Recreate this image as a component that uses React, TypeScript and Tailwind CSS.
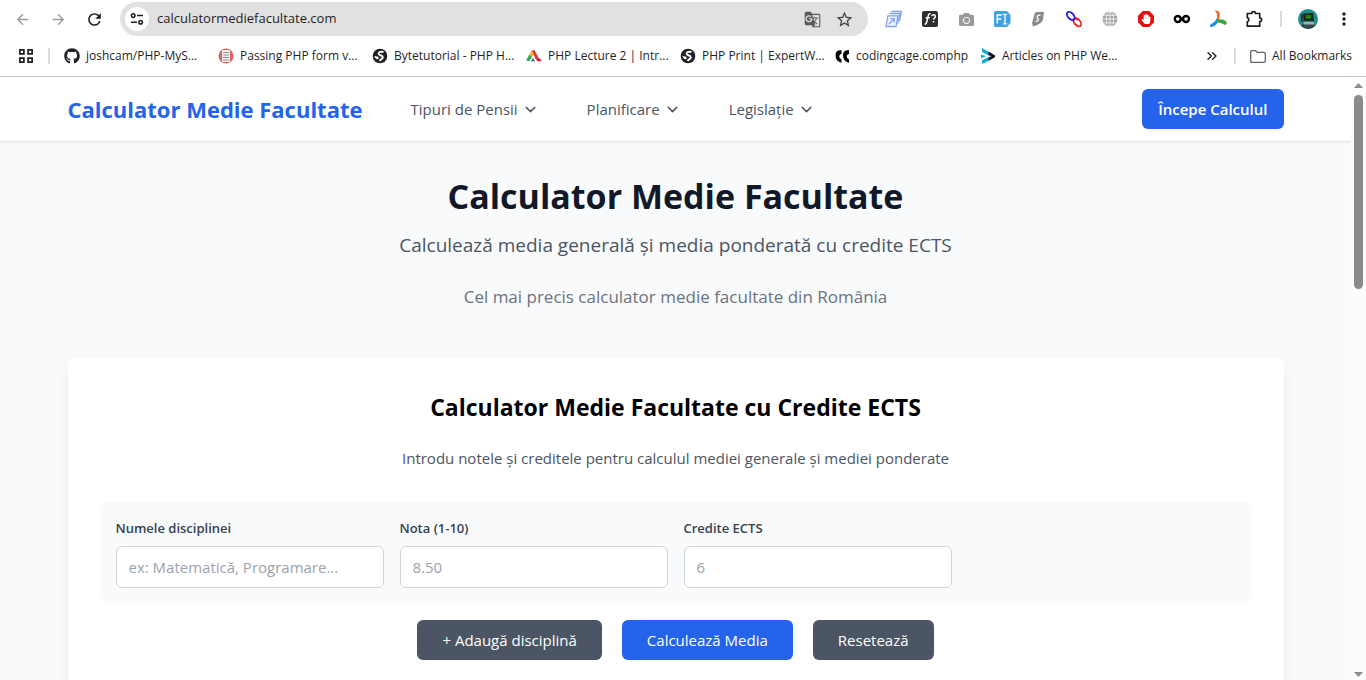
import React from "react";
import { FaGithub, FaHandPaper, FaCamera } from "react-icons/fa";
import { MdGTranslate, MdStarBorder, MdArrowBack, MdArrowForward, MdRefresh, MdMoreVert } from "react-icons/md";
import { ChevronDown, ChevronsRight } from "lucide-react";

function TuneIcon() {
  return (
    <svg width="14" height="14" viewBox="0 0 14 14" fill="none" stroke="#1f1f1f" strokeWidth="1.5">
      <circle cx="3.2" cy="3.6" r="1.8" />
      <path d="M7 3.6h6M1 10.2h6" />
      <circle cx="10.6" cy="10.2" r="1.8" />
    </svg>
  );
}

function StackIcon() {
  return (
    <svg width="18" height="18" viewBox="0 0 18 18" fill="#eef4ff" stroke="#82a4ea" strokeWidth="1.3">
      <path d="M6 1.5h10.5l-2 9.5" />
      <path d="M4.4 3.6h10.4l-2 10" />
      <path d="M2.8 5.8h10.2L11 16.5H1z" />
      <path d="M4 14l5-5M5.4 8.7h3.8v3.8" />
    </svg>
  );
}

function FunctionIcon() {
  return (
    <svg width="16" height="16" viewBox="0 0 16 16">
      <rect width="16" height="16" rx="2" fill="#2d2d2d" />
      <path d="M2.6 13c1.6.3 2-.9 2.4-3L6.2 4.900C6.600 3 7.400 2.400 8.600 2.900M3.600 6.700h4.200" fill="none" stroke="#fff" strokeWidth="1.5" />
      <path d="M9.800 5.300c.2-2 3.600-2 3.600.1 0 1.500-1.900 1.600-1.900 3.300M11.500 10v1.500" fill="none" stroke="#fff" strokeWidth="1.500" />
    </svg>
  );
}

function FontTagIcon() {
  return (
    <svg width="17" height="16" viewBox="0 0 17 16">
      <path d="M1.500 0H13l3.500 4v8L13 16H1.500Q0 16 0 14.500v-13Q0 0 1.500 0z" fill="#41a3e0" />
      <path d="M3.200 12.500V4h4.600M3.200 8h4M9 3.200q2 0 2 1.300 0-1.300 2-1.300M11 4.500v7.200M9 13q2 0 2-1.300 0 1.300 2 1.300" fill="none" stroke="#fff" strokeWidth="1.300" />
    </svg>
  );
}

function ShieldIcon() {
  return (
    <svg width="14" height="16" viewBox="0 0 14 16">
      <path d="M4 1.500Q8 .3 13 1l-1 7.500Q10.500 13 2 15.500L1 12z" fill="#8a8b8e" />
      <path d="M9.500 4.300c-2-.5-3.500.5-3.300 2 .2 1.300 1.500 1.400 1.100 2.700-.3 1-1.500 1.500-2.800 1.300" fill="none" stroke="#fff" strokeWidth="1.300" />
    </svg>
  );
}

function ChainIcon() {
  return (
    <svg width="18" height="18" viewBox="0 0 18 18" fill="none" strokeWidth="1.700">
      <ellipse cx="12.200" cy="12.200" rx="5" ry="2.900" transform="rotate(48 12.200 12.200)" stroke="#ee1420" />
      <ellipse cx="5.800" cy="6" rx="5" ry="2.900" transform="rotate(48 5.800 6)" stroke="#1a12e8" />
      <path d="M9.600 7.600q2 .8 3.200 2.600" stroke="#ee1420" />
    </svg>
  );
}

function GreyGlobeIcon() {
  return (
    <svg width="16" height="16" viewBox="0 0 16 16">
      <circle cx="8" cy="8" r="7.500" fill="#a2a2a2" />
      <g fill="none" stroke="#fff" strokeWidth=".8">
        <ellipse cx="8" cy="8" rx="3.600" ry="7.500" />
        <path d="M8 0v16M0 8h16M1.500 4.200h13M1.500 11.800h13" />
      </g>
    </svg>
  );
}

function StopHandIcon() {
  return (
    <span className="grid size-4 place-items-center">
      <svg width="16" height="16" viewBox="0 0 16 16" className="col-start-1 row-start-1">
        <path d="M4.700 0h6.600L16 4.700v6.600L11.300 16H4.700L0 11.300V4.700z" fill="#e60f0f" />
      </svg>
      <FaHandPaper size={10} color="#fff" className="col-start-1 row-start-1" />
    </span>
  );
}

function InfinityIcon() {
  return (
    <svg width="18" height="10" viewBox="0 0 18 10" fill="none" stroke="#000" strokeWidth="2.400">
      <circle cx="4.800" cy="5" r="3" />
      <circle cx="13" cy="5" r="3" />
      <path d="M7 3.500l4 3.200M7 6.700l4-3.200" strokeWidth="1.600" />
    </svg>
  );
}

function TriskeleIcon() {
  return (
    <svg width="18" height="18" viewBox="0 0 18 18">
      <path d="M5.800.7C9.500.2 11 2 10.700 5.500L10 10.500 7.600 9.500C8.400 6 8.600 3 5.800.7z" fill="#f5661f" />
      <path d="M7.600 8.500l2.400 2C8 14 5.500 17 2 17c-1.700-.1-1.500-2-.1-2.800C4.700 12.700 6.500 11 7.600 8.500z" fill="#1b8fea" />
      <path d="M6.700 12.400l3-3.200c3.300 0 6.700.6 8 2.800.5 1.800-.8 3.300-2.300 2.800-2.500-1.900-5-2.400-8.700-2.400z" fill="#3aa63a" />
    </svg>
  );
}

function PuzzleIcon() {
  return (
    <svg width="18" height="18" viewBox="0 0 18 18" fill="none" stroke="#1f1f1f" strokeWidth="1.700" strokeLinejoin="round">
      <path d="M2.300 3.500h4.400a1.900 1.900 0 0 1 3.800 0h4.200v4.300a1.900 1.900 0 0 1 0 3.800v4.600H2.300v-4.400a2.200 2.200 0 0 0 0-4.200z" />
    </svg>
  );
}

function AvatarIcon() {
  return (
    <svg width="20" height="20" viewBox="0 0 20 20">
      <circle cx="10" cy="10" r="10" fill="#1f8f8a" />
      <path d="M3 17l3-3h9l3 2a10 10 0 0 1-15 1z" fill="#33474c" />
      <path d="M5 4.500l10-.5 1 8H6z" fill="#1d2326" />
      <path d="M7 6l7-.3.500 4.800H7.300z" fill="#14420f" />
      <path d="M8 7h5M8 8.700h4.500" stroke="#4fc22d" strokeWidth=".8" />
      <path d="M5 13h10.500l1.500 2.500H6z" fill="#9fb2b2" />
      <path d="M3 5l2 .5.500 8L3 12z" fill="#3b2f2e" />
    </svg>
  );
}

function AppsIcon() {
  return (
    <svg width="14" height="14" viewBox="0 0 14 14" fill="none" stroke="#1f1f1f" strokeWidth="1.700">
      <path d="M.9.900h4v4h-4zM9.100.900h4v4h-4zM.9 9.100h4v4h-4zM9.100 9.100h4v4h-4z" />
    </svg>
  );
}

function DocIcon() {
  return (
    <svg width="16" height="16" viewBox="0 0 16 16">
      <circle cx="8" cy="8" r="7.500" fill="#d9665c" />
      <rect x="4" y="2" width="8" height="12" rx="1" fill="#f3eeee" />
      <path d="M5.200 4.500h5.600M5.200 7h5.600M5.200 9.500h5.600M5.200 12h5.600" stroke="#8f8f8f" strokeWidth="1.200" />
    </svg>
  );
}

function GlobeIcon() {
  return (
    <svg width="16" height="16" viewBox="0 0 16 16">
      <circle cx="8" cy="8" r="7.300" fill="#202124" />
      <path d="M11.500 4.200C9.500 3.200 6.500 4 6.500 5.800 6.600 7.500 10.800 7 10.800 9.300 10.600 11.300 8.500 11 7.600 13" fill="none" stroke="#fff" strokeWidth="1.900" />
      <path d="M2.300 8l4 .8.500 1.900-2 .6Q2.800 10.300 2.300 8z" fill="#fff" />
    </svg>
  );
}

function TriangleLogo() {
  return (
    <svg width="16" height="12" viewBox="0 0 16 12">
      <path d="M6 .3L3.300 4.500 6 7l2-3z" fill="#f4b81c" />
      <path d="M3.300 4.500L0 10.500l3.300.7L6 7z" fill="#38a852" />
      <path d="M6 .3h2.500l4 7.200-3 1.500L7.500 4z" fill="#e5322d" />
      <path d="M9.500 9l3-1.500 3.500 3.300-4 .6z" fill="#d81f3e" />
      <path d="M4.800 11.300L7 8l2 3.300z" fill="#4a5c86" />
    </svg>
  );
}

function QuotesLogo() {
  return (
    <svg width="15" height="13" viewBox="0 0 15 13" fill="#000">
      <path d="M6.500.3Q.5-.3.500 5.300.5 11.500 6.500 12.800V9.300Q4 8.500 4.300 6 4.500 4 6.500 4z" />
      <path d="M14 .3Q8-.3 8 5.300q0 6.200 6 7.500V9.300Q11.500 8.500 11.800 6 12 4 14 4z" />
    </svg>
  );
}

function ArrowLogo() {
  return (
    <svg width="14" height="16" viewBox="0 0 14 16">
      <path d="M1 0l8.500 5v3.400L1 4z" fill="#1aa3dd" />
      <path d="M1 16v-3.700L9.500 8v3.700z" fill="#1aa3dd" />
      <path d="M0 6.500l5 1.800-5 2z" fill="#1aa3dd" />
      <path d="M7.500 3.600L14 7.400v1.800l-6.500 3.600V9.900L10.500 8.300 7.500 6.700z" fill="#111" />
    </svg>
  );
}

function FolderIcon() {
  return (
    <svg width="16" height="13" viewBox="0 0 16 13" fill="none" stroke="#5f6368" strokeWidth="1.300">
      <path d="M.7 11V2Q.7.700 2 .7h3.600l1.700 1.700H14q1.300 0 1.300 1.300V11q0 1.300-1.300 1.300H2Q.7 12.300.7 11z" />
    </svg>
  );
}

const extensions = [
  { name: "Tab copier", icon: <StackIcon /> },
  { name: "Font finder", icon: <FunctionIcon /> },
  { name: "Screenshot", icon: <FaCamera size={15} color="#9a9a9a" /> },
  { name: "Font tag", icon: <FontTagIcon /> },
  { name: "Shield", icon: <ShieldIcon /> },
  { name: "Link checker", icon: <ChainIcon /> },
  { name: "Globe", icon: <GreyGlobeIcon /> },
  { name: "Blocker", icon: <StopHandIcon /> },
  { name: "Infinity", icon: <InfinityIcon /> },
  { name: "Triskele", icon: <TriskeleIcon /> },
  { name: "Extensions", icon: <PuzzleIcon /> },
];

const bookmarks = [
  { label: "joshcam/PHP-MyS...", icon: <FaGithub size={16} color="#1f2328" />, width: "w-[154px]" },
  { label: "Passing PHP form v...", icon: <DocIcon />, width: "w-[154px]" },
  { label: "Bytetutorial - PHP H...", icon: <GlobeIcon />, width: "w-[154px]" },
  { label: "PHP Lecture 2 | Intr...", icon: <TriangleLogo />, width: "w-[154px]" },
  { label: "PHP Print | ExpertW...", icon: <GlobeIcon />, width: "w-[154px]" },
  { label: "codingcage.comphp", icon: <QuotesLogo />, width: "w-[146px]" },
  { label: "Articles on PHP We...", icon: <ArrowLogo />, width: "w-auto" },
];

function ToolButton({ label, children }: { label: string; children: React.ReactNode }) {
  return (
    <button type="button" aria-label={label} className="flex h-9 w-9 shrink-0 items-center justify-center">
      {children}
    </button>
  );
}

function BrowserChrome() {
  return (
    <header className="shrink-0 border-b border-[#c8c8c8] bg-white text-[#1f1f1f]">
      <div className="flex h-[38px] items-center px-1">
        <ToolButton label="Back"><MdArrowBack size={17} color="#9b9b9b" /></ToolButton>
        <ToolButton label="Forward"><MdArrowForward size={17} color="#9b9b9b" /></ToolButton>
        <ToolButton label="Reload"><MdRefresh size={19} /></ToolButton>
        <div className="mx-2 flex h-[34px] min-w-0 flex-1 items-center rounded-full bg-[#e1e1e1] pr-2 pl-[5px]">
          <button type="button" aria-label="Site information" className="flex size-6 shrink-0 items-center justify-center rounded-full bg-white">
            <TuneIcon />
          </button>
          <input aria-label="Address" defaultValue="calculatormediefacultate.com" className="ml-2 min-w-0 flex-1 bg-transparent text-[13px] outline-none" />
          <button type="button" aria-label="Translate" className="flex w-8 justify-center"><MdGTranslate size={17} color="#5a5a5a" /></button>
          <button type="button" aria-label="Bookmark" className="flex w-8 justify-center"><MdStarBorder size={19} color="#444" /></button>
        </div>
        {extensions.map((e) => (
          <ToolButton key={e.name} label={e.name}>{e.icon}</ToolButton>
        ))}
        <span className="mx-2 h-4 w-0.5 bg-[#dedada]" />
        <ToolButton label="Profile"><AvatarIcon /></ToolButton>
        <ToolButton label="Menu"><MdMoreVert size={20} /></ToolButton>
      </div>
      <nav aria-label="Bookmarks" className="flex h-[38px] items-center pr-3.5 pb-0.5 pl-[19px] text-[12px]">
        <button type="button" aria-label="Apps"><AppsIcon /></button>
        <span className="mr-3.5 ml-[15px] h-4 w-0.5 bg-[#dedada]" />
        <div className="flex min-w-0 flex-1 overflow-hidden">
          {bookmarks.map((b) => (
            <a key={b.label} href="#" className={`flex shrink-0 items-center gap-1.5 whitespace-nowrap ${b.width}`}>
              <span className="flex w-4 justify-center">{b.icon}</span>
              {b.label}
            </a>
          ))}
        </div>
        <button type="button" aria-label="More bookmarks"><ChevronsRight size={16} /></button>
        <span className="mr-3.5 ml-3.5 h-4 w-0.5 bg-[#dedada]" />
        <a href="#" className="flex items-center gap-1.5 whitespace-nowrap"><FolderIcon />All Bookmarks</a>
      </nav>
    </header>
  );
}

function SiteNav() {
  return (
    <div className="border-b border-gray-200 bg-white shadow-xs">
      <div className="mx-auto flex h-16 max-w-7xl items-center px-8">
        <a href="#" className="mr-12 text-[22px] font-bold whitespace-nowrap text-[#2563eb]">Calculator Medie Facultate</a>
        <nav aria-label="Principal" className="flex gap-12">
          {["Tipuri de Pensii", "Planificare", "Legislație"].map((item) => (
            <button key={item} type="button" className="flex items-center gap-1 text-[15px] whitespace-nowrap text-[#4b5563]">
              {item}
              <ChevronDown size={17} />
            </button>
          ))}
        </nav>
        <button type="button" className="ml-auto h-10 rounded-md bg-[#2563eb] px-4 text-[15px] font-semibold whitespace-nowrap text-white">Începe Calculul</button>
      </div>
    </div>
  );
}

const fields = [
  { id: "name", label: "Numele disciplinei", placeholder: "ex: Matematică, Programare..." },
  { id: "grade", label: "Nota (1-10)", placeholder: "8.50" },
  { id: "credits", label: "Credite ECTS", placeholder: "6" },
];

function Calculator() {
  return (
    <section className="rounded-lg bg-white p-8 shadow-lg">
      <h2 className="text-center text-[23px] leading-[34px] font-bold text-black">Calculator Medie Facultate cu Credite ECTS</h2>
      <p className="mt-[22px] text-center text-[15px] leading-6 text-[#4b5563]">Introdu notele și creditele pentru calculul mediei generale și mediei ponderate</p>
      <form onSubmit={(e) => e.preventDefault()}>
        <div className="mt-8 grid grid-cols-4 gap-4 rounded-lg bg-gray-50 p-4">
          {fields.map((f) => (
            <div key={f.id}>
              <label htmlFor={f.id} className="mb-2 block text-[13px] leading-5 font-semibold text-[#374151]">{f.label}</label>
              <input id={f.id} placeholder={f.placeholder} className="block h-[42px] w-full rounded-md border border-gray-300 bg-white px-3 text-[15px] placeholder:text-[#9ca3af]" />
            </div>
          ))}
        </div>
        <div className="mt-4 flex justify-center gap-5 text-[15px] text-white">
          <button type="button" className="h-10 rounded-md bg-[#4b5563] px-[25px]">+ Adaugă disciplină</button>
          <button type="submit" className="h-10 rounded-md bg-[#2563eb] px-[25px]">Calculează Media</button>
          <button type="reset" className="h-10 rounded-md bg-[#4b5563] px-[25px]">Resetează</button>
        </div>
      </form>
    </section>
  );
}

function ScrollTrack() {
  return (
    <div aria-hidden="true" className="flex w-[15px] shrink-0 flex-col items-center justify-between bg-[#fcfcfc] pt-1.5 pb-[3px]">
      <div className="flex flex-col items-center gap-[7px]">
        <svg width="9" height="5" viewBox="0 0 9 5" fill="#8b8b8b"><path d="M4.500 0L9 5H0z" /></svg>
        <div className="h-[194px] w-[9px] rounded-full bg-[#8b8b8b]" />
      </div>
      <svg width="9" height="5" viewBox="0 0 9 5" fill="#8b8b8b"><path d="M0 0h9L4.500 5z" /></svg>
    </div>
  );
}

export default function App() {
  return (
    <div className="flex h-screen flex-col overflow-hidden font-['Open_Sans','Noto_Sans',sans-serif]">
      <BrowserChrome />
      <div className="flex min-h-0 flex-1">
        <div className="min-w-0 flex-1 overflow-hidden bg-gray-50">
          <SiteNav />
          <main className="mx-auto max-w-7xl px-8 pt-[34px] pb-8">
            <div className="mb-[47px] text-center">
              <h1 className="text-[34px] leading-10 font-bold text-[#111827]">Calculator Medie Facultate</h1>
              <p className="mt-[15px] text-[19px] leading-7 text-[#4b5563]">Calculează media generală și media ponderată cu credite ECTS</p>
              <p className="mt-6 text-[17px] leading-7 text-[#6b7280]">Cel mai precis calculator medie facultate din România</p>
            </div>
            <Calculator />
          </main>
        </div>
        <ScrollTrack />
      </div>
    </div>
  );
}
